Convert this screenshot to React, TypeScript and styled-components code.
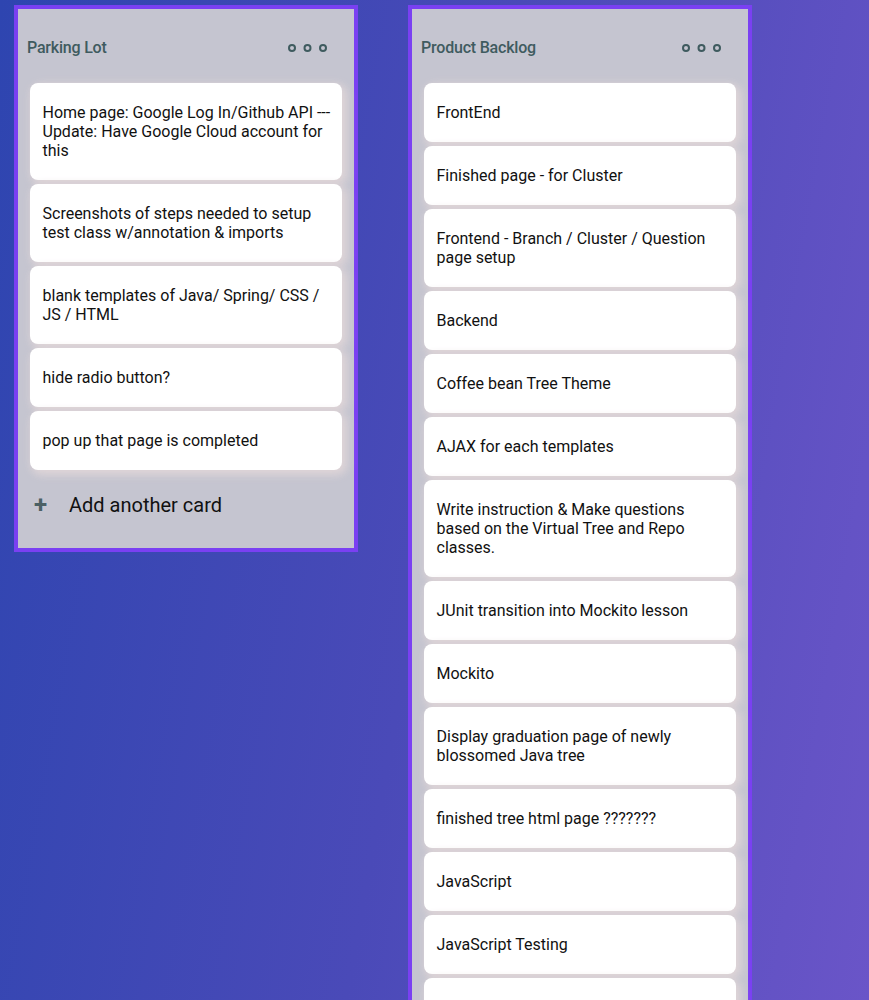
import React from "react";
import styled, { createGlobalStyle } from "styled-components";

const GlobalStyle = createGlobalStyle`
  html, body {
    margin: 0;
    padding: 0;
    min-height: 100%;
  }
  body {
    background: linear-gradient(100deg, #2e45b0 0%, #4a4ab8 50%, #6a55c8 100%);
    background-attachment: fixed;
    font-family: Roboto, "Liberation Sans", Arial, sans-serif;
  }
`;

const Board = styled.div`
  display: flex;
  align-items: flex-start;
  gap: 50px;
  padding: 5px 14px;
  min-height: 1000px;
  box-sizing: border-box;
`;

const List = styled.section`
  width: 344px;
  box-sizing: border-box;
  border: 4px solid #7a40f2;
  background: #c5c5d0;
  display: flex;
  flex-direction: column;
  flex-shrink: 0;
`;

const Header = styled.header`
  display: flex;
  align-items: center;
  justify-content: space-between;
  padding: 29px 26px 26px 9px;
`;

const Title = styled.h2`
  margin: 0;
  font-size: 16px;
  line-height: 19px;
  font-weight: 500;
  color: #3f5b5f;
  letter-spacing: -0.2px;
`;

const MenuButton = styled.button`
  border: 0;
  background: transparent;
  padding: 0;
  display: flex;
  align-items: center;
  cursor: pointer;
`;

const Cards = styled.div`
  display: flex;
  flex-direction: column;
  gap: 4px;
  padding: 0 12px;
`;

const Card = styled.div`
  background: #ffffff;
  border-radius: 8px;
  padding: 20px 9px 20px 12.5px;
  min-height: 19px;
  font-size: 16px;
  line-height: 19px;
  color: #111111;
  box-shadow: 3px 3px 8px 2px rgba(224, 214, 216, 0.95);
`;

const AddCard = styled.button`
  display: flex;
  align-items: center;
  gap: 20px;
  border: 0;
  background: transparent;
  padding: 23px 0 31px 16px;
  font-family: Roboto, "Liberation Sans", Arial, sans-serif;
  font-size: 20px;
  line-height: 24px;
  color: #111111;
  cursor: pointer;
  text-align: left;
`;

const Plus = styled.span`
  font-size: 24px;
  font-weight: 700;
  color: #4b6064;
  width: 15px;
  line-height: 24px;
`;

const Dots = () => (
  <svg width="40" height="10" viewBox="0 0 40 10">
    {[4, 19.5, 35].map((cx) => (
      <circle key={cx} cx={cx} cy={5} r={3} fill="none" stroke="#3f5b5f" strokeWidth={2} />
    ))}
  </svg>
);

type ListData = { title: string; cards: string[]; add?: boolean };

const lists: ListData[] = [
  {
    title: "Parking Lot",
    add: true,
    cards: [
      "Home page: Google Log In/Github API --- Update: Have Google Cloud account for this",
      "Screenshots of steps needed to setup test class w/annotation & imports",
      "blank templates of Java/ Spring/ CSS / JS / HTML",
      "hide radio button?",
      "pop up that page is completed",
    ],
  },
  {
    title: "Product Backlog",
    cards: [
      "FrontEnd",
      "Finished page - for Cluster",
      "Frontend - Branch / Cluster / Question page setup",
      "Backend",
      "Coffee bean Tree Theme",
      "AJAX for each templates",
      "Write instruction & Make questions based on the Virtual Tree and Repo classes.",
      "JUnit transition into Mockito lesson",
      "Mockito",
      "Display graduation page of newly blossomed Java tree",
      "finished tree html page ???????",
      "JavaScript",
      "JavaScript Testing",
      "",
    ],
  },
];

export default function App() {
  return (
    <>
      <GlobalStyle />
      <Board>
        {lists.map((list) => (
          <List key={list.title}>
            <Header>
              <Title>{list.title}</Title>
              <MenuButton aria-label="List actions">
                <Dots />
              </MenuButton>
            </Header>
            <Cards>
              {list.cards.map((c, i) => (
                <Card key={i}>{c}</Card>
              ))}
            </Cards>
            {list.add && (
              <AddCard>
                <Plus>+</Plus>
                Add another card
              </AddCard>
            )}
          </List>
        ))}
      </Board>
    </>
  );
}
